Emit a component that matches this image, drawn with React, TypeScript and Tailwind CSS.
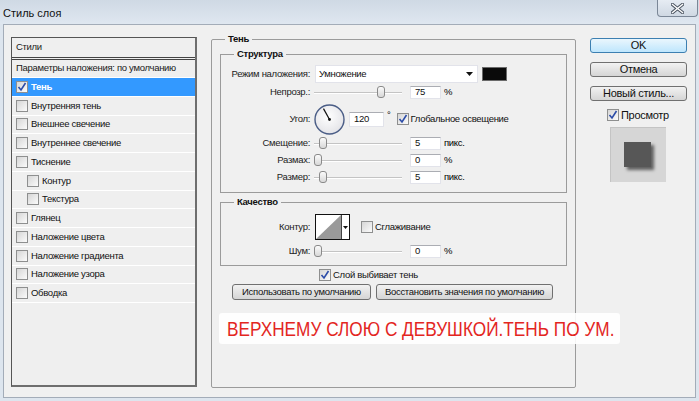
import React from "react"

const ui = "font-['Liberation_Sans',Arial,sans-serif]"
const small = "text-[9.5px] tracking-[-0.3px]"

const styles = [
  { name: "Тень", checked: true, active: true },
  { name: "Внутренняя тень" },
  { name: "Внешнее свечение" },
  { name: "Внутреннее свечение" },
  { name: "Тиснение" },
  { name: "Контур", indent: true },
  { name: "Текстура", indent: true },
  { name: "Глянец" },
  { name: "Наложение цвета" },
  { name: "Наложение градиента" },
  { name: "Наложение узора" },
  { name: "Обводка" },
]

function CheckBox({ checked = false }: { checked?: boolean }) {
  return (
    <span className="w-[12px] h-[12px] shrink-0 border border-[#8e8f8f] bg-gradient-to-br from-[#d6d6d6] to-[#fbfbfb] flex items-center justify-center">
      {checked && (
        <svg width="10" height="10" viewBox="0 0 10 10">
          <path d="M1.5 5 L4 8 L8.5 1" fill="none" stroke="#2c4ca8" strokeWidth="1.6" />
        </svg>
      )}
    </span>
  )
}

function Slider({ thumb }: { thumb: number }) {
  return (
    <div className="relative w-[88px] h-[13px] flex items-center">
      <div className="w-full h-[2px] bg-[#c4c4c4] border-b border-white" />
      <div
        className="absolute top-[0px] w-[8px] h-[12px] rounded-[3px] border border-[#8a8a8a] bg-gradient-to-b from-[#fbfbfb] to-[#d8d8d8]"
        style={{ left: thumb }}
      />
    </div>
  )
}

function NumInput({ value, w = "w-[31px]", h = "h-[13px]" }: { value: string; w?: string; h?: string }) {
  return (
    <div className={`${w} ${h} bg-white border border-[#e2e3ea] border-t-[#abadb3] flex items-center pl-[4px] ${small} text-[#111]`}>
      {value}
    </div>
  )
}

function Label({ children }: { children: React.ReactNode }) {
  return <div className={`w-[90px] shrink-0 text-right pr-[1px] ${small} text-[#222]`}>{children}</div>
}

function Btn({ children, className = "", primary = false }: { children: React.ReactNode; className?: string; primary?: boolean }) {
  return (
    <div
      className={`flex items-center justify-center whitespace-nowrap rounded-[3px] border ${
        primary
          ? "border-[#3c7fb1] bg-gradient-to-b from-[#eaf6fd] to-[#bee6fd]"
          : "border-[#707070] bg-gradient-to-b from-[#f2f2f2] to-[#d5d5d5]"
      } ${className}`}
    >
      {children}
    </div>
  )
}

function Dial() {
  return (
    <svg width="31" height="31" viewBox="0 0 31 31">
      <defs>
        <radialGradient id="dg" cx="45%" cy="40%" r="60%">
          <stop offset="0%" stopColor="#ffffff" />
          <stop offset="100%" stopColor="#e4e4e8" />
        </radialGradient>
      </defs>
      <circle cx="15.5" cy="15.5" r="14.5" fill="url(#dg)" stroke="#4a5d86" strokeWidth="1.4" />
      <line x1="15.5" y1="15.5" x2="9.5" y2="4.6" stroke="#111" strokeWidth="1.2" />
      <circle cx="15.5" cy="15.5" r="1.4" fill="#111" />
    </svg>
  )
}

export default function App() {
  return (
    <div className={`w-[699px] h-[401px] bg-[#dde5ee] flex flex-col relative overflow-hidden ${ui}`}>
      {/* title bar */}
      <div className="h-[24px] flex items-start justify-between bg-gradient-to-b from-[#cfd9e4] to-[#dfe7f0]">
        <div className="pl-[3px] pt-[5px] text-[11px] text-[#111]">Стиль слоя</div>
        <div className="w-[41px] h-[17px] mr-[1px] rounded-b-[4px] border border-t-0 border-[#7b8797] bg-gradient-to-b from-[#e6ecf3] to-[#cfd8e3] flex items-center justify-center">
          <svg width="13" height="11" viewBox="0 0 13 11">
            <path d="M1.5 1.5 L11.5 9.5 M11.5 1.5 L1.5 9.5" stroke="#4d5663" strokeWidth="3.4" strokeLinecap="square" />
            <path d="M1.5 1.5 L11.5 9.5 M11.5 1.5 L1.5 9.5" stroke="#ffffff" strokeWidth="1.4" strokeLinecap="square" />
          </svg>
        </div>
      </div>

      {/* body */}
      <div className="mx-[3px] h-[374px] border border-[#a3acb8] bg-[#f0f0f0] flex items-start pl-[7px]">
        {/* left list */}
        <div className={`mt-[12px] w-[186px] h-[350px] border-t border-l border-[#555] border-r-2 border-b-2 border-r-[#6e6e6e] border-b-[#6e6e6e] bg-[#efefef] flex flex-col ${small} text-[#1a1a1a]`}>
          <div className="h-[22px] shrink-0 flex items-center pl-[4px] border-b-[3px] border-double border-[#444]">Стили</div>
          <div className="h-[18px] shrink-0 flex items-center pl-[4px] border-b border-white">Параметры наложения: по умолчанию</div>
          {styles.map((s) => (
            <div
              key={s.name}
              className={`h-[18.75px] shrink-0 flex items-center gap-[3px] border-b border-white ${
                s.indent ? "pl-[15px]" : "pl-[4px]"
              } ${s.active ? "bg-[#3399ff] text-white font-bold" : "text-[#111]"}`}
            >
              <CheckBox checked={s.checked} />
              <span>{s.name}</span>
            </div>
          ))}
        </div>

        {/* middle */}
        <div className="ml-[14px] mt-[8px] w-[365px]">
          <fieldset className="h-[355px] border border-[#9b9b9b] rounded-[2px]">
            <legend className={`ml-[13px] px-[3px] ${small} font-bold leading-[12px] text-[#111]`}>Тень</legend>

            <fieldset className="mt-[3px] mx-[8px] border border-[#9b9b9b] pt-[5px] pb-[8px]">
              <legend className={`ml-[13px] px-[3px] ${small} font-bold leading-[12px] text-[#111]`}>Структура</legend>
              <div className="flex items-center h-[18px]">
                <Label>Режим наложения:</Label>
                <div className={`ml-[4px] w-[163px] h-[18px] bg-white border border-[#e2e3ea] flex items-center justify-between pl-[3px] pr-[4px] ${small} text-[#111]`}>
                  <span>Умножение</span>
                  <svg width="7" height="4" viewBox="0 0 7 4">
                    <path d="M0 0 H7 L3.5 4 Z" fill="#111" />
                  </svg>
                </div>
                <div className="ml-[4px] w-[25px] h-[14px] bg-[#0a0a0a] border border-[#6a6a6a]" />
              </div>
              <div className="flex items-center h-[13px] mt-[3px]">
                <Label>Непрозр.:</Label>
                <div className="ml-[3px]"><Slider thumb={63} /></div>
                <div className="ml-[8px]"><NumInput value="75" /></div>
                <span className={`ml-[3px] ${small}`}>%</span>
              </div>
              <div className="flex items-center h-[30px] mt-[5px]">
                <Label>Угол:</Label>
                <div className="ml-[3px]"><Dial /></div>
                <div className="ml-[4px]"><NumInput value="120" w="w-[35px]" h="h-[15px]" /></div>
                <span className={`ml-[3px] self-start mt-[4px] ${small}`}>°</span>
                <div className={`ml-[6px] flex items-center gap-[2px] ${small} text-[#111]`}>
                  <CheckBox checked />
                  <span>Глобальное освещение</span>
                </div>
              </div>
              <div className="flex items-center h-[13px] mt-[3px]">
                <Label>Смещение:</Label>
                <div className="ml-[3px]"><Slider thumb={5} /></div>
                <div className="ml-[8px]"><NumInput value="5" /></div>
                <span className={`ml-[3px] ${small}`}>пикс.</span>
              </div>
              <div className="flex items-center h-[13px] mt-[4px]">
                <Label>Размах:</Label>
                <div className="ml-[3px]"><Slider thumb={0} /></div>
                <div className="ml-[8px]"><NumInput value="0" /></div>
                <span className={`ml-[3px] ${small}`}>%</span>
              </div>
              <div className="flex items-center h-[13px] mt-[4px]">
                <Label>Размер:</Label>
                <div className="ml-[3px]"><Slider thumb={5} /></div>
                <div className="ml-[8px]"><NumInput value="5" /></div>
                <span className={`ml-[3px] ${small}`}>пикс.</span>
              </div>
            </fieldset>

            <fieldset className="mt-[3px] mx-[8px] border border-[#9b9b9b] pt-[6px] pb-[7px]">
              <legend className={`ml-[13px] px-[3px] ${small} font-bold leading-[12px] text-[#111]`}>Качество</legend>
              <div className="flex items-center h-[26px]">
                <Label>Контур:</Label>
                <div className="ml-[4px] w-[35px] h-[26px] border border-[#111] bg-white flex">
                  <svg width="25" height="24" viewBox="0 0 25 24" className="shrink-0">
                    <path d="M0 24 L25 0 L25 24 Z" fill="#9a9a9a" />
                  </svg>
                  <div className="flex-1 border-l border-[#444] flex items-center justify-center">
                    <svg width="5" height="3" viewBox="0 0 5 3">
                      <path d="M0 0 H5 L2.5 3 Z" fill="#111" />
                    </svg>
                  </div>
                </div>
                <div className={`ml-[11px] flex items-center gap-[2px] ${small} text-[#111]`}>
                  <CheckBox />
                  <span>Сглаживание</span>
                </div>
              </div>
              <div className="flex items-center h-[13px] mt-[5px]">
                <Label>Шум:</Label>
                <div className="ml-[3px]"><Slider thumb={0} /></div>
                <div className="ml-[8px]"><NumInput value="0" /></div>
                <span className={`ml-[3px] ${small}`}>%</span>
              </div>
            </fieldset>

            <div className={`mt-[3px] ml-[107px] flex items-center gap-[2px] h-[12px] ${small} text-[#111]`}>
              <CheckBox checked />
              <span>Слой выбивает тень</span>
            </div>
            <div className={`mt-[3px] ml-[20px] flex gap-[5px] ${small} text-[#111]`}>
              <Btn className="w-[139px] h-[16px]">Использовать по умолчанию</Btn>
              <Btn className="w-[177px] h-[16px]">Восстановить значения по умолчанию</Btn>
            </div>
          </fieldset>
        </div>

        {/* right */}
        <div className="ml-[14px] mt-[13px] w-[97px] flex flex-col text-[11px] tracking-[-0.3px] text-[#111]">
          <Btn primary className="h-[15px]">OK</Btn>
          <Btn className="h-[15px] mt-[9px]">Отмена</Btn>
          <Btn className="h-[15px] mt-[9px]">Новый стиль...</Btn>
          <div className="mt-[8px] pl-[17px] flex items-center gap-[2px] h-[12px]">
            <CheckBox checked />
            <span>Просмотр</span>
          </div>
          <div className="mt-[6px] ml-[20px] w-[56px] h-[55px] bg-[#d6d6d6] border-l border-t border-[#c4c4c4] flex items-center justify-center">
            <div className="w-[27px] h-[25px] bg-[#575757] shadow-[3px_3px_3px_rgba(0,0,0,0.55)] -mt-[2px] -ml-[2px]" />
          </div>
        </div>
      </div>

      {/* annotation */}
      <div className="absolute left-[219px] top-[313px] w-[401px] h-[31px] bg-white/90 rounded-[3px] flex items-center pl-[8px] text-[21px] text-[#e3261f] whitespace-nowrap">
        <span className="inline-block origin-left scale-x-[0.82]">ВЕРХНЕМУ СЛОЮ С ДЕВУШКОЙ.ТЕНЬ ПО УМ.</span>
      </div>
    </div>
  )
}
